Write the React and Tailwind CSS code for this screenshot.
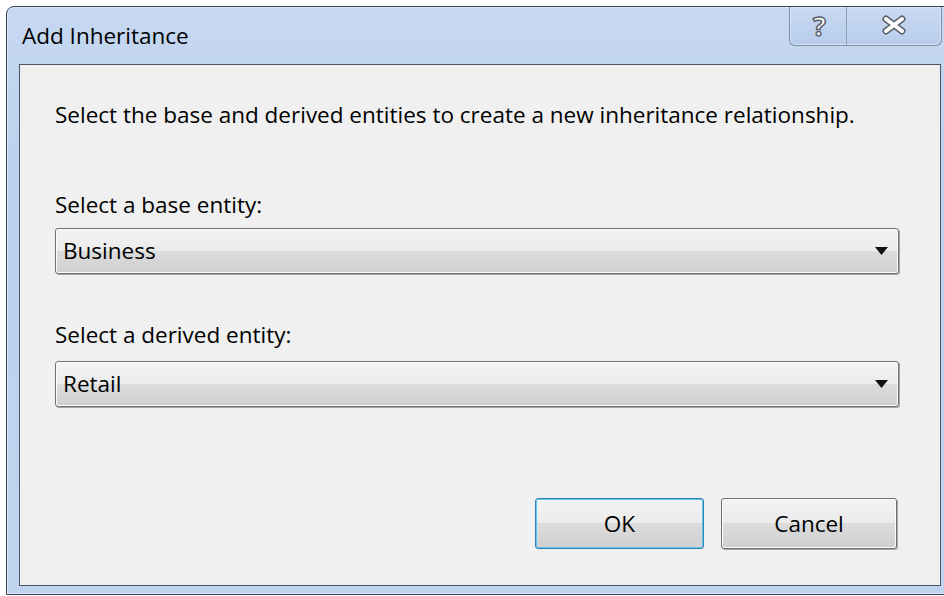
import React from "react";

const font = { fontFamily: '"Open Sans", "Noto Sans", sans-serif' };

const ArrowDown = () => (
  <svg width="13" height="8" viewBox="0 0 13 8" className="shrink-0">
    <polygon points="0,0 13,0 6.5,8" fill="#111" />
  </svg>
);

const ComboBox = ({ value }) => (
  <div className="flex h-[46px] items-center justify-between rounded-[3px] border border-[#707070] bg-[linear-gradient(#f3f3f3_0%,#ebebeb_50%,#dcdcdc_50%,#cfcfcf_100%)] pl-[7px] pr-[10px] shadow-[inset_0_0_0_1px_#fcfcfc,1px_1px_0_#a6a6a6]">
    <span className="text-[22.5px] leading-[28px] text-black">{value}</span>
    <ArrowDown />
  </div>
);

const DialogButton = ({ label, primary }) => (
  <button
    className={
      "flex h-[51px] items-center justify-center rounded-[3px] border text-[22.5px] leading-[28px] text-black bg-[linear-gradient(#f3f3f3_0%,#ebebeb_50%,#dcdcdc_50%,#cfcfcf_100%)] " +
      (primary
        ? "w-[169px] border-[#3c7fb1] shadow-[inset_0_0_0_1px_#58c8f2]"
        : "w-[176px] border-[#707070] shadow-[inset_0_0_0_1px_#fcfcfc,1px_1px_0_#a6a6a6]")
    }
  >
    {label}
  </button>
);

const CaptionButtons = () => (
  <div className="flex h-[39px] self-start rounded-b-[6px] border border-t-0 border-[#7d8ea8] bg-[linear-gradient(#c9daf2,#b7cdec)] shadow-[inset_0_0_0_1px_#d8e5f6]">
    <div className="flex w-[57px] items-center justify-center border-r border-[#8fa0b8] pb-[2px] pl-[3px]">
      <span className="text-[27px] font-bold leading-none text-white [-webkit-text-stroke:1.5px_#5a6068]">
        ?
      </span>
    </div>
    <div className="flex w-[94px] items-center justify-center pb-[2px]">
      <svg width="28" height="22" viewBox="0 0 28 22">
        <path
          d="M6 5 L22 17 M22 5 L6 17"
          stroke="#5a6068"
          strokeWidth="7"
          strokeLinecap="round"
        />
        <path
          d="M6 5 L22 17 M22 5 L6 17"
          stroke="#ffffff"
          strokeWidth="4"
          strokeLinecap="round"
        />
      </svg>
    </div>
  </div>
);

export default function App() {
  return (
    <div
      className="h-[596px] w-[944px] overflow-hidden bg-white pl-[6px] pt-[6px]"
      style={font}
    >
      <div className="flex h-[589px] w-[948px] flex-col rounded-tl-[8px] border border-[#3b4452] bg-[linear-gradient(#c6d8f1,#bcd1ee_30%,#c0d4ef)] shadow-[inset_0_0_0_1px_#dbe7f7]">
        <div className="flex h-[57px] shrink-0 items-center justify-between pl-[15px] pr-[11px]">
          <span className="text-[22.5px] leading-[28px] text-black">
            Add Inheritance
          </span>
          <CaptionButtons />
        </div>

        <div className="mx-[12px] flex h-[522px] flex-col border border-[#4d5666] bg-[#f0f0f0] pl-[35px] pr-[41px]">
          <p className="mt-[36px] text-[22.5px] leading-[28px] text-black">
            Select the base and derived entities to create a new inheritance
            relationship.
          </p>

          <label className="mt-[62px] text-[22.5px] leading-[28px] text-black">
            Select a base entity:
          </label>
          <div className="mt-[9px]">
            <ComboBox value="Business" />
          </div>

          <label className="mt-[47px] text-[22.5px] leading-[28px] text-black">
            Select a derived entity:
          </label>
          <div className="mt-[12px]">
            <ComboBox value="Retail" />
          </div>

          <div className="mt-[91px] flex justify-end gap-[17px] pr-[2px]">
            <DialogButton label="OK" primary />
            <DialogButton label="Cancel" />
          </div>
        </div>
      </div>
    </div>
  );
}
